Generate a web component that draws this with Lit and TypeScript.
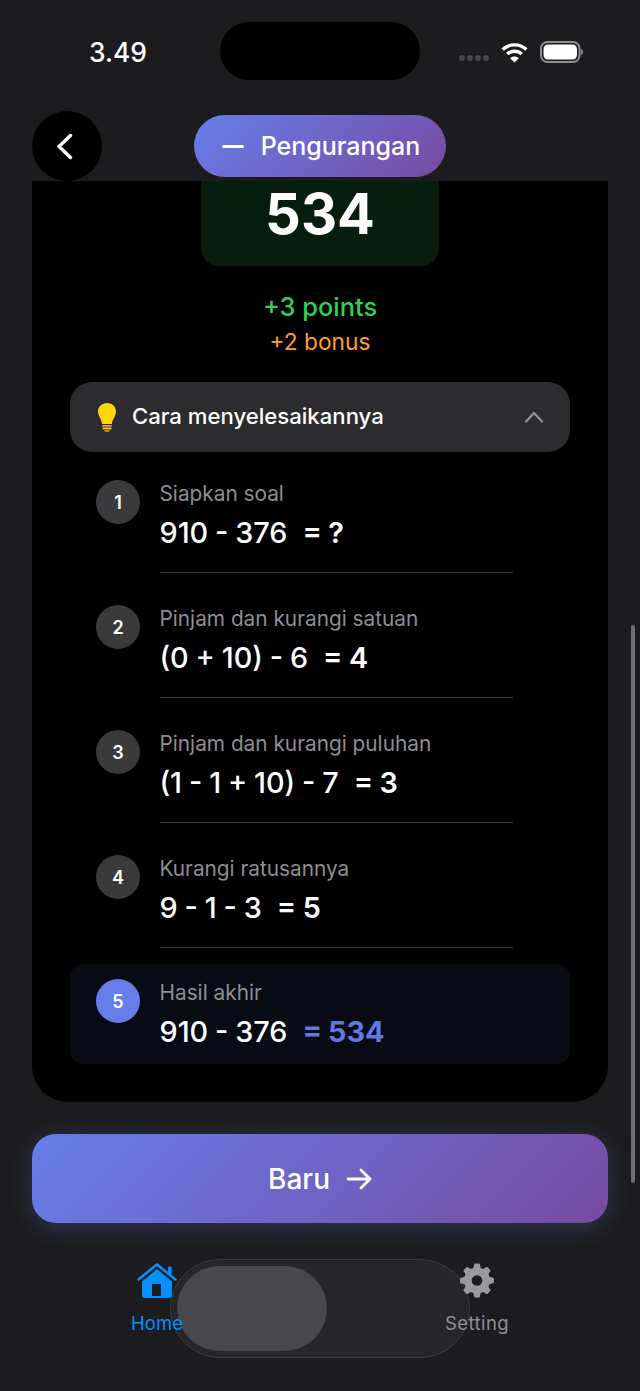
import { LitElement, html, css, svg } from "lit";
import { customElement } from "lit/decorators.js";

function gearPath(cx: number, cy: number, ro: number, ri: number, teeth: number, hole: number) {
  const pts: string[] = [];
  const step = (Math.PI * 2) / teeth;
  for (let i = 0; i < teeth; i++) {
    const a = i * step - Math.PI / 2;
    const list: [number, number][] = [
      [ri, a - step * 0.3],
      [ro, a - step * 0.15],
      [ro, a + step * 0.15],
      [ri, a + step * 0.3],
    ];
    for (const [r, t] of list) {
      pts.push(`${(cx + r * Math.cos(t)).toFixed(2)} ${(cy + r * Math.sin(t)).toFixed(2)}`);
    }
  }
  const ring = `M${pts.join("L")}Z`;
  const h = `M${cx - hole} ${cy}a${hole} ${hole} 0 1 0 ${hole * 2} 0a${hole} ${hole} 0 1 0 ${-hole * 2} 0Z`;
  return ring + h;
}

interface Step {
  n: number;
  label: string;
  expr: string;
  eq: string;
}

const STEPS: Step[] = [
  { n: 1, label: "Siapkan soal", expr: "910 - 376", eq: "= ?" },
  { n: 2, label: "Pinjam dan kurangi satuan", expr: "(0 + 10) - 6", eq: "= 4" },
  { n: 3, label: "Pinjam dan kurangi puluhan", expr: "(1 - 1 + 10) - 7", eq: "= 3" },
  { n: 4, label: "Kurangi ratusannya", expr: "9 - 1 - 3", eq: "= 5" },
];

@customElement("app-root")
export class AppRoot extends LitElement {
  static styles = css`
    :host {
      display: flex;
      flex-direction: column;
      position: relative;
      width: 640px;
      height: 1391px;
      overflow: hidden;
      background: #1c1c1e;
      color: #fff;
      font-family: Inter, "Noto Sans", sans-serif;
    }
    .status {
      position: relative;
      height: 111px;
      flex: none;
      box-sizing: border-box;
      padding: 41px 56px 0 89px;
      display: flex;
      justify-content: space-between;
      align-items: flex-start;
    }
    .time {
      font-size: 26.4px;
      line-height: 22px;
      font-weight: 500;
    }
    .island {
      position: absolute;
      left: 220px;
      top: 22px;
      width: 200px;
      height: 58px;
      border-radius: 29px;
      background: #000;
    }
    .sysicons {
      display: flex;
      align-items: center;
      height: 21px;
    }
    .dots {
      display: flex;
      gap: 2px;
      margin-right: 12px;
      margin-top: 13px;
    }
    .dots i {
      width: 6px;
      height: 6px;
      border-radius: 50%;
      background: #48484a;
    }
    .wifi {
      margin-right: 12px;
      margin-top: 1px;
    }
    .header {
      flex: none;
      height: 70px;
      box-sizing: border-box;
      padding: 0 32px;
      display: grid;
      grid-template-columns: 1fr auto 1fr;
      align-items: center;
    }
    .back {
      width: 70px;
      height: 70px;
      border-radius: 50%;
      background: #000;
      display: flex;
      align-items: center;
      justify-content: center;
    }
    .pill {
      width: 252px;
      height: 62px;
      border-radius: 31px;
      background: linear-gradient(135deg, #667eea, #764ba2);
      display: flex;
      align-items: center;
      justify-content: center;
      gap: 17px;
      padding-left: 2px;
      font-size: 25px;
      font-weight: 500;
      box-sizing: border-box;
    }
    .minus {
      width: 22px;
      height: 3px;
      border-radius: 2px;
      background: #fff;
    }
    .scroll {
      flex: none;
      height: 921px;
      overflow: hidden;
      padding: 0 32px;
    }
    .card {
      background: #000;
      height: 921px;
      box-sizing: border-box;
      border-radius: 0 0 36px 36px;
      padding: 0 38px;
      display: flex;
      flex-direction: column;
      align-items: stretch;
    }
    .answer {
      align-self: center;
      width: 238px;
      height: 85px;
      border-radius: 0 0 18px 18px;
      background: #071e0f;
      font-size: 56px;
      font-weight: 700;
      line-height: 66px;
      text-align: center;
    }
    .points {
      margin-top: 25px;
      text-align: center;
      font-size: 25.4px;
      line-height: 32px;
      font-weight: 500;
      color: #30d158;
    }
    .bonus {
      margin-top: 4px;
      text-align: center;
      font-size: 22.7px;
      line-height: 30px;
      color: #ff9f2e;
    }
    .how {
      margin-top: 25px;
      height: 70px;
      border-radius: 22px;
      background: #2c2c2e;
      display: flex;
      align-items: center;
      padding: 0 26px 0 26px;
      font-size: 22.15px;
      font-weight: 500;
    }
    .how span {
      margin-left: 14px;
      margin-bottom: 2px;
      flex: 1;
    }
    .steps {
      display: flex;
      flex-direction: column;
      margin-top: 28px;
    }
    .step {
      display: flex;
      gap: 19.5px;
      height: 125px;
      box-sizing: border-box;
      padding: 0 26px;
    }
    .num {
      width: 44px;
      height: 44px;
      flex: none;
      border-radius: 50%;
      background: #3a3a3c;
      display: flex;
      align-items: center;
      justify-content: center;
      font-size: 18px;
      font-weight: 600;
    }
    .body {
      flex: 1;
      margin-right: 31px;
      border-bottom: 1.5px solid #38383a;
      height: 92px;
    }
    .label {
      margin-top: 1px;
      font-size: 20.8px;
      line-height: 26px;
      color: #8e8e93;
    }
    .expr {
      margin-top: 7px;
      font-size: 28.8px;
      line-height: 38px;
      font-weight: 500;
      word-spacing: -0.8px;
      display: flex;
      gap: 15px;
    }
    .eq {
      font-weight: 600;
    }
    .final {
      height: 100px;
      margin-top: -16px;
      padding-top: 15px;
      background: #080b14;
      border-radius: 14px;
    }
    .final .num {
      background: #667eea;
    }
    .final .body {
      border: none;
    }
    .final .eq {
      color: #5f78e6;
      font-weight: 700;
    }
    .next {
      flex: none;
      margin: 32px 32px 0;
      height: 89px;
      border-radius: 24px;
      background: linear-gradient(135deg, #667eea, #764ba2);
      box-shadow: 0 4px 24px rgba(102, 126, 234, 0.28);
      display: flex;
      align-items: center;
      justify-content: center;
      gap: 16px;
      font-size: 28px;
      font-weight: 500;
    }
    .tabs {
      flex: none;
      position: relative;
      margin-top: 40px;
      display: grid;
      grid-template-columns: 314px 314px;
      gap: 6px;
    }
    .tab {
      position: relative;
      display: flex;
      flex-direction: column;
      align-items: center;
      font-size: 18.5px;
      line-height: 24px;
      color: #8e8e93;
    }
    .tab.on {
      color: #0091ff;
    }
    .tab.off span {
      letter-spacing: 0.45px;
    }
    .tab svg {
      height: 35px;
      margin-bottom: 13px;
    }
    .switch {
      position: absolute;
      left: 170px;
      top: -4px;
      width: 300px;
      height: 99px;
      box-sizing: border-box;
      border-radius: 50px;
      border: 1.5px solid #3c3c3e;
      background: #262628;
      padding: 5.5px;
    }
    .thumb {
      width: 150px;
      height: 85px;
      border-radius: 43px;
      background: #48484a;
    }
    .scrollbar {
      position: absolute;
      left: 631px;
      top: 625px;
      width: 4px;
      height: 558px;
      border-radius: 2px;
      background: #6e6e73;
    }
  `;

  private renderStep(s: Step) {
    return html`<div class="step">
      <div class="num">${s.n}</div>
      <div class="body">
        <div class="label">${s.label}</div>
        <div class="expr"><span>${s.expr}</span><span class="eq">${s.eq}</span></div>
      </div>
    </div>`;
  }

  render() {
    return html`
      <div class="status">
        <div class="time">3.49</div>
        <div class="island"></div>
        <div class="sysicons">
          <div class="dots"><i></i><i></i><i></i><i></i></div>
          <svg class="wifi" width="27" height="21" viewBox="0 0 27 21" fill="none" stroke="#fff" stroke-width="3.4">
            <path d="M1.6 7.6C8.2 1.3 18.8 1.3 25.4 7.6" />
            <path d="M6.2 12.1C10.3 8.2 16.7 8.2 20.8 12.1" />
            <path d="M13.5 20.5L9.1 16.2C11.6 13.9 15.4 13.9 17.9 16.2Z" fill="#fff" stroke="none" />
          </svg>
          <svg width="44" height="22" viewBox="0 0 44 22">
            <rect x="1" y="1" width="38.5" height="20" rx="6.5" fill="none" stroke="#8e8e93" stroke-width="2" />
            <rect x="3.5" y="3.5" width="33.5" height="15" rx="4.5" fill="#fff" />
            <path d="M41 8v6c1.3-.4 2-1.6 2-3s-.7-2.600-2-3z" fill="#8e8e93" />
          </svg>
        </div>
      </div>
      <div class="header">
        <div class="back">
          <svg width="20" height="30" viewBox="0 0 20 30" fill="none" stroke="#fff" stroke-width="3.4" stroke-linecap="round" stroke-linejoin="round">
            <path d="M13.5 4.500L2 15.500L13.500 26.500" />
          </svg>
        </div>
        <div class="pill"><i class="minus"></i><span>Pengurangan</span></div>
        <div></div>
      </div>
      <div class="scroll">
        <div class="card">
          <div class="answer">534</div>
          <div class="points">+3 points</div>
          <div class="bonus">+2 bonus</div>
          <div class="how">
            <svg width="22" height="30" viewBox="0 0 22 30">
              <path d="M11 1C5.800 1 2 4.800 2 9.600c0 4.400 3.400 7.200 4.200 12.400h9.600C16.600 16.800 20 14 20 9.600 20 4.800 16.200 1 11 1z" fill="#ffd60a" />
              <rect x="6.200" y="23" width="9.600" height="1.700" fill="#ff9f0a" />
              <rect x="6.600" y="25.600" width="8.800" height="1.700" fill="#ffd60a" />
              <path d="M8 28.200h6c-.4 1-1.600 1.600-3 1.600s-2.600-.6-3-1.600z" fill="#ff9f0a" />
            </svg>
            <span>Cara menyelesaikannya</span>
            <svg width="20" height="12" viewBox="0 0 20 12" fill="none" stroke="#8e8e93" stroke-width="2.400" stroke-linecap="round" stroke-linejoin="round">
              <path d="M2 10.500L10 2L18 10.500" />
            </svg>
          </div>
          <div class="steps">
            ${STEPS.map((s) => this.renderStep(s))}
            <div class="step final">
              <div class="num">5</div>
              <div class="body">
                <div class="label">Hasil akhir</div>
                <div class="expr"><span>910 - 376</span><span class="eq">= 534</span></div>
              </div>
            </div>
          </div>
        </div>
      </div>
      <div class="next">
        <span>Baru</span>
        <svg width="26" height="24" viewBox="0 0 26 24" fill="none" stroke="#fff" stroke-width="2.800" stroke-linecap="round" stroke-linejoin="round">
          <path d="M2 12H24M15 3L24 12L15 21" />
        </svg>
      </div>
      <div class="tabs">
        <div class="switch"><div class="thumb"></div></div>
        <div class="tab on">
          <svg width="40" height="35" viewBox="0 0 40 35">
            <path d="M1.500 16.500L20 1.500L38.500 16.500" fill="none" stroke="#0091ff" stroke-width="2.600" stroke-linecap="round" stroke-linejoin="round" />
            <rect x="31" y="3.500" width="3.600" height="8" rx="1" fill="#0091ff" />
            <path fill-rule="evenodd" d="M20 6L35 18.500V32c0 1.700-1.300 3-3 3H8c-1.700 0-3-1.300-3-3V18.500zM15 21v12h9V21z" fill="#0091ff" />
          </svg>
          <span>Home</span>
        </div>
        <div class="tab off">
          <svg width="36" height="35" viewBox="0 0 36 36">
            ${svg`<path fill-rule="evenodd" d="${gearPath(18, 18, 16.5, 12.5, 8, 6.5)}" fill="#98989d" stroke="#98989d" stroke-width="2" stroke-linejoin="round" />`}
          </svg>
          <span>Setting</span>
        </div>
      </div>
      <div class="scrollbar"></div>
    `;
  }
}
